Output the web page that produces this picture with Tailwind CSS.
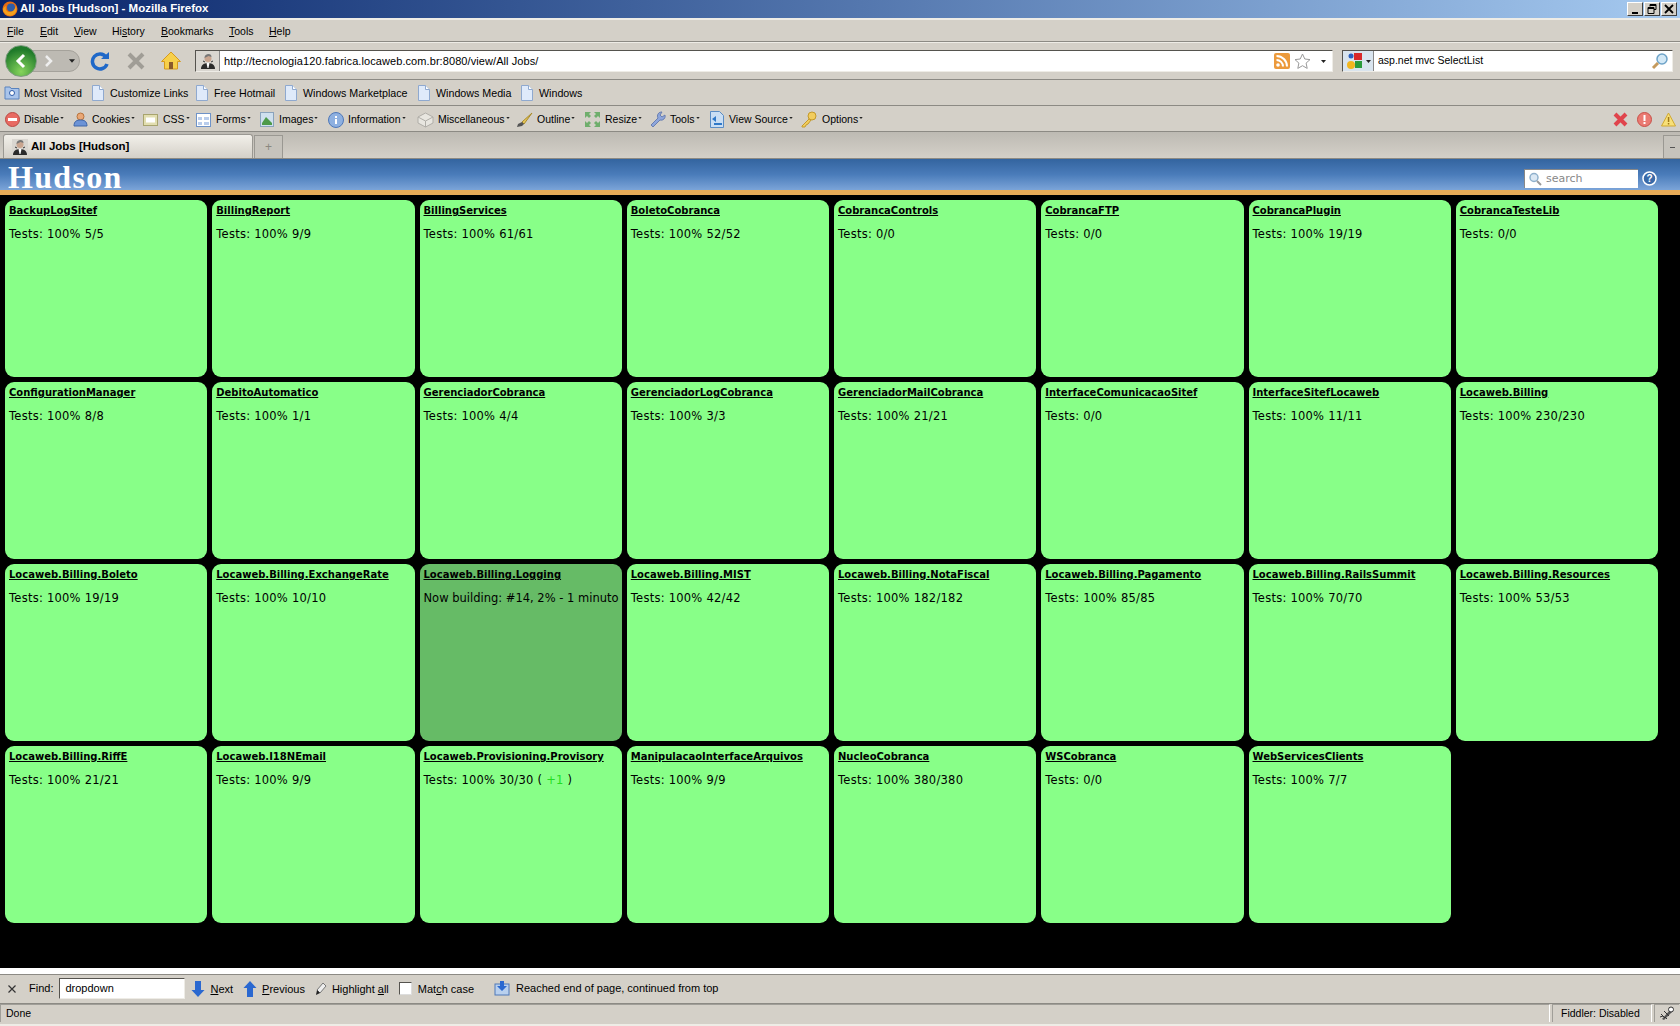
<!DOCTYPE html>
<html lang="en">
<head>
  <meta charset="UTF-8" />
  <title>All Jobs [Hudson] - Mozilla Firefox</title>
  <script src="https://cdn.jsdelivr.net/npm/@tailwindcss/browser@4"></script>
</head>
<body class="w-[1680px] h-[1026px] overflow-hidden flex flex-col bg-[#d4d0c8] font-['Liberation_Sans',sans-serif] text-[11px] text-black">
  <svg class="hidden">
    <symbol id="doc" viewBox="0 0 14 16"><path d="M1.5.5h7l4 4v11h-11z" fill="#dfeafa" stroke="#8fa9cf"/><path d="M8.5.5v4h4" fill="#fff" stroke="#8fa9cf"/></symbol>
    <symbol id="butler" viewBox="0 0 16 16"><rect width="16" height="16" fill="#d9d6d0"/><path d="M1 16c0-4 3-6 7-6s7 2 7 6z" fill="#2b2b2b"/><path d="M6.500 10h3l-1 5h-1z" fill="#fff"/><circle cx="8" cy="5.500" r="3.500" fill="#c9a58f"/><path d="M4.500 5c0-3 2-4 4-4s3 1 3 3l-3-1z" fill="#777"/><path d="M5 9l-2-1M11 9l2-1" stroke="#333"/></symbol>
    <symbol id="tri" viewBox="0 0 5 3"><path d="M0 0h5L2.500 3z" fill="#222"/></symbol>
  </svg>

  <!-- title bar -->
  <div class="h-[18px] shrink-0 flex items-center pl-[2px] pr-[2px] bg-gradient-to-r from-[#0a246a] to-[#a6caf0] text-white font-bold text-[11.5px]">
    <svg class="w-4 h-4 shrink-0" viewBox="0 0 16 16"><circle cx="8" cy="8" r="7.500" fill="#e66b12"/><circle cx="9" cy="6.500" r="4" fill="#2f5ca8"/><path d="M1 9c1 4 6 7 10 5s4-6 3-9c-1 3-3 6-6 6S3 9 4 5C2 6 1 7 1 9z" fill="#f3a01c"/></svg>
    <span class="ml-[2px] leading-none">All Jobs [Hudson] - Mozilla Firefox</span>
    <div class="ml-auto flex gap-[1px] pr-[1px]">
      <div class="w-[16px] h-[14px] bg-[#d4d0c8] border border-t-white border-l-white border-r-[#404040] border-b-[#404040] flex items-end justify-center pb-[1px]"><div class="w-[6px] h-[2px] bg-black"></div></div>
      <div class="w-[16px] h-[14px] bg-[#d4d0c8] border border-t-white border-l-white border-r-[#404040] border-b-[#404040] flex items-center justify-center">
        <svg class="w-[10px] h-[10px]" viewBox="0 0 10 10" fill="none" stroke="#000"><path d="M3 2.500V.5h6v5H7"/><path d="M3 1.500h6" /><path d="M1 3.500h6v6H1zM1 4.500h6"/></svg>
      </div>
      <div class="w-[16px] h-[14px] bg-[#d4d0c8] border border-t-white border-l-white border-r-[#404040] border-b-[#404040] flex items-center justify-center">
        <svg class="w-[10px] h-[10px]" viewBox="0 0 10 10" stroke="#000" stroke-width="1.800"><path d="M1 1l8 8M9 1l-8 8"/></svg>
      </div>
    </div>
  </div>
  <div class="h-[2px] shrink-0 bg-[#eeece6]"></div>

  <!-- menu bar -->
  <div class="h-[22px] shrink-0 flex items-center border-b border-[#8c8a84] pl-[7px] pt-[2px] text-[10.5px]">
    <span class="w-[33px]"><u>F</u>ile</span>
    <span class="w-[34px]"><u>E</u>dit</span>
    <span class="w-[38px]"><u>V</u>iew</span>
    <span class="w-[49px]">Hi<u>s</u>tory</span>
    <span class="w-[68px]"><u>B</u>ookmarks</span>
    <span class="w-[40px]"><u>T</u>ools</span>
    <span><u>H</u>elp</span>
  </div>

  <!-- navigation bar -->
  <div class="h-[38px] shrink-0 flex items-center border-b border-[#8c8a84] border-t border-t-[#eeece6] pl-[5px] relative">
    <div class="w-[75px] h-[32px] shrink-0 flex items-center relative">
      <div class="absolute left-[14px] top-[5px] w-[61px] h-[22px] rounded-r-[11px] bg-[#bdbab3] border border-[#a5a29b]"></div>
      <div class="absolute left-0 top-0 w-[32px] h-[32px] rounded-full bg-[radial-gradient(circle_at_50%_85%,#86d45c,#1f7a2a_75%)] border border-[#7d9c7f] flex items-center justify-center">
        <svg class="w-[14px] h-[16px]" viewBox="0 0 14 16" fill="none" stroke="#fff" stroke-width="3"><path d="M10 2L4 8l6 6"/></svg>
      </div>
      <svg class="absolute left-[38px] top-[10px] w-[10px] h-[12px]" viewBox="0 0 10 12" fill="none" stroke="#eeeeee" stroke-width="2.500"><path d="M3 1l5 5-5 5"/></svg>
      <svg class="absolute left-[64px] top-[14px] w-[6px] h-[4px]"><use href="#tri"/></svg>
    </div>
    <svg class="w-[20px] h-[20px] ml-[10px] shrink-0" viewBox="0 0 20 20" fill="none"><path d="M16 6a7.500 7.500 0 1 0 1 7" stroke="#1f68c8" stroke-width="3.500"/><path d="M11 8h8V1z" fill="#1f68c8"/></svg>
    <svg class="w-[18px] h-[18px] ml-[17px] shrink-0" viewBox="0 0 18 18" stroke="#a09d96" stroke-width="4"><path d="M2 2l14 14M16 2L2 16"/></svg>
    <svg class="w-[20px] h-[20px] ml-[16px] shrink-0" viewBox="0 0 20 20"><path d="M10 1L0.500 10.500H3.500V18h13v-7.500h3z" fill="#f7d04b" stroke="#d69a1e"/><rect x="8" y="11" width="4" height="7" fill="#8a5a2c"/></svg>
    <div class="ml-[14px] w-[1138px] h-[22px] shrink-0 bg-white border border-t-[#55534e] border-l-[#55534e] border-r-[#eeece6] border-b-[#eeece6] flex items-center">
      <div class="w-[24px] h-full bg-[#d9d6d0] border-r border-[#888] flex items-center justify-center shrink-0"><svg class="w-4 h-4"><use href="#butler"/></svg></div>
      <span class="ml-[4px] tracking-[0.08px]">http://tecnologia120.fabrica.locaweb.com.br:8080/view/All Jobs/</span>
      <svg class="ml-auto w-[16px] h-[16px] shrink-0" viewBox="0 0 16 16"><rect width="16" height="16" rx="2" fill="#ec9a3c"/><circle cx="4" cy="12" r="1.800" fill="#fff"/><path d="M2.500 7a6.500 6.500 0 0 1 6.500 6.500M2.500 3a10.500 10.500 0 0 1 10.500 10.500" stroke="#fff" stroke-width="2" fill="none"/></svg>
      <svg class="ml-[4px] w-[17px] h-[17px] shrink-0" viewBox="0 0 17 17"><path d="M8.500 1l2.300 5 5.200.6-3.900 3.500 1.100 5.300-4.700-2.700-4.700 2.700 1.100-5.300L1 6.600 6.200 6z" fill="#fff" stroke="#9a9a9a"/></svg>
      <svg class="ml-[10px] mr-[6px] w-[5px] h-[3px] shrink-0"><use href="#tri"/></svg>
    </div>
    <div class="ml-[9px] w-[331px] h-[22px] shrink-0 bg-white border border-t-[#55534e] border-l-[#55534e] border-r-[#eeece6] border-b-[#eeece6] flex items-center">
      <div class="w-[31px] h-full bg-[#d9e4ee] border-r border-[#888] flex items-center pl-[3px] shrink-0">
        <svg class="w-[18px] h-[18px] shrink-0" viewBox="0 0 18 18"><circle cx="5" cy="4" r="2.500" fill="#2a5fc0"/><rect x="8" y="1" width="8" height="7" fill="#d8282a"/><rect x="9" y="9" width="7" height="7" fill="#2a9a3a"/><circle cx="5" cy="13" r="4" fill="#f2b61e"/></svg>
        <svg class="ml-[2px] w-[5px] h-[3px] shrink-0"><use href="#tri"/></svg>
      </div>
      <span class="ml-[4px] text-[10.5px]">asp.net mvc SelectList</span>
      <svg class="ml-auto mr-[3px] w-[18px] h-[18px] shrink-0" viewBox="0 0 18 18" fill="none"><circle cx="11" cy="7" r="5" fill="#d2e8f6" stroke="#6ea3c8" stroke-width="1.500"/><path d="M7 11l-5 5" stroke="#c59a5e" stroke-width="3"/></svg>
    </div>
  </div>

  <!-- bookmarks -->
  <div class="h-[26px] shrink-0 flex items-center border-b border-[#8c8a84] pl-[4px] pt-[2px] text-[10.7px]">
    <div class="flex items-center w-[87px] shrink-0 gap-[4px]">
      <svg class="w-4 h-4 shrink-0" viewBox="0 0 16 16"><path d="M1 2h5l1 1.500h8V14H1z" fill="#a9c4ea" stroke="#5a83bd"/><circle cx="8" cy="8" r="2.500" fill="#fff" stroke="#2f5ca8"/></svg><span>Most Visited</span>
    </div>
    <div class="flex items-center w-[104px] shrink-0 gap-[5px]"><svg class="w-[14px] h-4 shrink-0"><use href="#doc"/></svg><span>Customize Links</span></div>
    <div class="flex items-center w-[89px] shrink-0 gap-[5px]"><svg class="w-[14px] h-4 shrink-0"><use href="#doc"/></svg><span>Free Hotmail</span></div>
    <div class="flex items-center w-[133px] shrink-0 gap-[5px]"><svg class="w-[14px] h-4 shrink-0"><use href="#doc"/></svg><span>Windows Marketplace</span></div>
    <div class="flex items-center w-[103px] shrink-0 gap-[5px]"><svg class="w-[14px] h-4 shrink-0"><use href="#doc"/></svg><span>Windows Media</span></div>
    <div class="flex items-center shrink-0 gap-[5px]"><svg class="w-[14px] h-4 shrink-0"><use href="#doc"/></svg><span>Windows</span></div>
  </div>

  <!-- web developer toolbar -->
  <div class="h-[26px] shrink-0 flex items-center border-b border-[#8c8a84] pl-[5px] pt-[2px] text-[10.5px]">
    <div class="flex items-center w-[68px] shrink-0 gap-[4px]"><svg class="w-[15px] h-[15px] shrink-0" viewBox="0 0 15 15"><circle cx="7.500" cy="7.500" r="7" fill="#e86a62" stroke="#b94a44"/><rect x="3" y="6" width="9" height="3" fill="#fff"/></svg><span>Disable</span><svg class="w-[4px] h-[2px] -mt-[3px] -ml-[3px]"><use href="#tri"/></svg></div>
    <div class="flex items-center w-[70px] shrink-0 gap-[4px]"><svg class="w-[15px] h-[15px] shrink-0" viewBox="0 0 15 15"><circle cx="7.500" cy="4.500" r="3.500" fill="#eaa876" stroke="#b8733c"/><path d="M1 14c0-5 3-6 6.500-6s6.500 1 6.500 6z" fill="#6c93d6" stroke="#3f66a8"/></svg><span>Cookies</span><svg class="w-[4px] h-[2px] -mt-[3px] -ml-[3px]"><use href="#tri"/></svg></div>
    <div class="flex items-center w-[53px] shrink-0 gap-[5px]"><svg class="w-[15px] h-[12px] shrink-0" viewBox="0 0 15 12"><rect x=".5" y=".5" width="14" height="11" fill="#e2deb0" stroke="#a8a46e"/><rect x="3" y="3.500" width="9" height="5" fill="#fff"/></svg><span>CSS</span><svg class="w-[4px] h-[2px] -mt-[3px] -ml-[4px]"><use href="#tri"/></svg></div>
    <div class="flex items-center w-[64px] shrink-0 gap-[5px]"><svg class="w-[15px] h-[14px] shrink-0" viewBox="0 0 15 14"><rect x=".5" y=".5" width="14" height="13" fill="#fff" stroke="#6f93c8"/><path d="M2 4h4v3H2zM8 4h5v3H8zM2 9h4v3H2zM8 9h5v3H8z" fill="#b9cdec"/></svg><span>Forms</span><svg class="w-[4px] h-[2px] -mt-[3px] -ml-[4px]"><use href="#tri"/></svg></div>
    <div class="flex items-center w-[68px] shrink-0 gap-[5px]"><svg class="w-[14px] h-[15px] shrink-0" viewBox="0 0 14 15"><rect x=".5" y=".5" width="13" height="14" fill="#cfe0ee" stroke="#8aa3bc"/><path d="M2 11l4-6 3 3 3 3v2H2z" fill="#4d9a4a"/></svg><span>Images</span><svg class="w-[4px] h-[2px] -mt-[3px] -ml-[4px]"><use href="#tri"/></svg></div>
    <div class="flex items-center w-[89px] shrink-0 gap-[4px]"><svg class="w-[16px] h-[16px] shrink-0" viewBox="0 0 16 16"><circle cx="8" cy="8" r="7.500" fill="#8eb0e0" stroke="#4f78b8"/><rect x="7" y="7" width="2" height="5" fill="#fff"/><rect x="7" y="4" width="2" height="2" fill="#fff"/></svg><span>Information</span><svg class="w-[4px] h-[2px] -mt-[3px] -ml-[3px]"><use href="#tri"/></svg></div>
    <div class="flex items-center w-[99px] shrink-0 gap-[4px]"><svg class="w-[17px] h-[16px] shrink-0" viewBox="0 0 17 16"><path d="M8.500 1L16 5v6l-7.500 4L1 11V5z" fill="#e8e6e0" stroke="#b0aea8"/><path d="M1 5l7.500 4L16 5M8.500 9v6" fill="none" stroke="#b0aea8"/></svg><span>Miscellaneous</span><svg class="w-[4px] h-[2px] -mt-[3px] -ml-[3px]"><use href="#tri"/></svg></div>
    <div class="flex items-center w-[68px] shrink-0 gap-[4px]"><svg class="w-[17px] h-[16px] shrink-0" viewBox="0 0 17 16"><path d="M16 1L6 10l2 2z" fill="#e8c85a" stroke="#a88a2a"/><path d="M6 10l-4 2-1 3 5-1 2-2z" fill="#555"/></svg><span>Outline</span><svg class="w-[4px] h-[2px] -mt-[3px] -ml-[3px]"><use href="#tri"/></svg></div>
    <div class="flex items-center w-[66px] shrink-0 gap-[4px]"><svg class="w-[17px] h-[17px] shrink-0" viewBox="0 0 17 17"><path d="M1 1h6L5 3l2 2-2 2-2-2-2 2zM16 1v6l-2-2-2 2-2-2 2-2-2-2zM1 16v-6l2 2 2-2 2 2-2 2 2 2zM16 16h-6l2-2-2-2 2-2 2 2 2-2z" fill="#6fae6c"/></svg><span>Resize</span><svg class="w-[4px] h-[2px] -mt-[3px] -ml-[3px]"><use href="#tri"/></svg></div>
    <div class="flex items-center w-[59px] shrink-0 gap-[4px]"><svg class="w-[16px] h-[17px] shrink-0" viewBox="0 0 16 17"><path d="M11 1a4 4 0 0 0-3 6L1 14l2 2 7-7a4 4 0 0 0 5-5l-3 2-2-2 2-3z" fill="#8ea6dc" stroke="#6a7fb0"/></svg><span>Tools</span><svg class="w-[4px] h-[2px] -mt-[3px] -ml-[3px]"><use href="#tri"/></svg></div>
    <div class="flex items-center w-[91px] shrink-0 gap-[4px]"><svg class="w-[16px] h-[17px] shrink-0" viewBox="0 0 16 17"><path d="M1.500.5h9l4 4v12h-13z" fill="#c9def4" stroke="#5a8cc4"/><path d="M3 8l4-3v6zM5 12h8v2H5z" fill="#2f78c8"/></svg><span>View Source</span><svg class="w-[4px] h-[2px] -mt-[3px] -ml-[3px]"><use href="#tri"/></svg></div>
    <div class="flex items-center shrink-0 gap-[5px]"><svg class="w-[17px] h-[17px] shrink-0" viewBox="0 0 17 17"><circle cx="12" cy="5" r="4" fill="#f2cd5e" stroke="#c49a2a"/><path d="M9 8l-7 7v1h3l1-2 2-1 3-4z" fill="#f2cd5e" stroke="#c49a2a"/></svg><span>Options</span><svg class="w-[4px] h-[2px] -mt-[3px] -ml-[4px]"><use href="#tri"/></svg></div>
    <div class="ml-auto flex items-center pr-[4px]">
      <svg class="w-[15px] h-[15px] shrink-0" viewBox="0 0 15 15" stroke="#e0444c" stroke-width="4"><path d="M2 2l11 11M13 2L2 13"/></svg>
      <svg class="ml-[9px] w-[15px] h-[15px] shrink-0" viewBox="0 0 15 15"><circle cx="7.500" cy="7.500" r="7" fill="#ea7a72" stroke="#c85048"/><rect x="6.500" y="3" width="2" height="6" fill="#fff"/><rect x="6.500" y="10" width="2" height="2" fill="#fff"/></svg>
      <svg class="ml-[9px] w-[15px] h-[15px] shrink-0" viewBox="0 0 15 15"><path d="M7.500 1L14.500 14H.5z" fill="#f8e078" stroke="#d0a830"/><rect x="6.800" y="5" width="1.500" height="5" fill="#a07818"/><rect x="6.800" y="11" width="1.500" height="1.500" fill="#a07818"/></svg>
    </div>
  </div>

  <!-- tab strip -->
  <div class="h-[27px] shrink-0 flex items-end border-b border-[#8c8a84] pl-[3px] bg-gradient-to-b from-[#bdbab3] to-[#d4d0c8]">
    <div class="w-[250px] h-[24px] bg-gradient-to-b from-[#f2f0ea] to-[#d4d0c8] border border-[#9a9892] border-b-0 rounded-t-[3px] flex items-center pl-[8px] gap-[3px] font-bold text-[11.5px]">
      <svg class="w-4 h-4 shrink-0"><use href="#butler"/></svg><span>All Jobs [Hudson]</span>
    </div>
    <div class="ml-[1px] w-[29px] h-[23px] bg-[#c6c3bc] border border-[#9a9892] border-b-0 flex items-center justify-center text-[#8a8880] text-[12px]">+</div>
    <div class="ml-auto w-[17px] h-[23px] bg-[#c6c3bc] border border-[#9a9892] border-b-0 border-r-0 flex items-center justify-center">
      <div class="w-[5px] h-[1px] bg-[#555]"></div>
    </div>
  </div>

  <!-- hudson header -->
  <div class="h-[31px] shrink-0 flex items-center pl-[8px] bg-gradient-to-b from-[#33649f] via-[#4a7cba] to-[#7ba4d8]">
    <span class="mt-[5px] font-['Liberation_Serif',serif] font-bold text-[32px] tracking-[1.3px] leading-none text-white">Hudson</span>
    <div class="ml-auto mt-[8px] flex items-center pr-[23px]">
      <div class="w-[114px] h-[19px] bg-white border-l border-t border-[#888] flex items-center pl-[3px] gap-[4px] text-[#888] font-['DejaVu_Sans',sans-serif]">
        <svg class="w-[14px] h-[14px] shrink-0" viewBox="0 0 14 14" fill="none"><circle cx="6" cy="5.500" r="4" fill="#dbe8f4" stroke="#8fb0cc" stroke-width="1.500"/><path d="M9 9l4 4" stroke="#9a9a9a" stroke-width="2"/></svg>
        <span>search</span>
      </div>
      <svg class="ml-[4px] w-[15px] h-[15px] shrink-0" viewBox="0 0 15 15"><circle cx="7.500" cy="7.500" r="6.500" fill="#3a6aa8" stroke="#fff" stroke-width="1.500"/><text x="7.500" y="11" text-anchor="middle" font-family="Liberation Sans" font-weight="bold" font-size="10" fill="#fff">?</text></svg>
    </div>
  </div>
  <div class="h-[5px] shrink-0 bg-[#e8ab57]"></div>

  <!-- job grid -->
  <div class="flex-1 bg-black pt-[5px] pl-[5px] pr-[22px] font-['DejaVu_Sans',sans-serif]">
    <div class="grid grid-cols-8 auto-rows-[177px] gap-x-[5px] gap-y-[5px]">
      <div class="bg-[#88ff88] rounded-[9px] px-[4px] pt-[3px]"><a class="text-[10px] font-bold underline block leading-[16px]">BackupLogSitef</a><p class="mt-[7px] text-[11.5px] tracking-[0.25px] leading-[16px]">Tests: 100% 5/5</p></div>
      <div class="bg-[#88ff88] rounded-[9px] px-[4px] pt-[3px]"><a class="text-[10px] font-bold underline block leading-[16px]">BillingReport</a><p class="mt-[7px] text-[11.5px] tracking-[0.25px] leading-[16px]">Tests: 100% 9/9</p></div>
      <div class="bg-[#88ff88] rounded-[9px] px-[4px] pt-[3px]"><a class="text-[10px] font-bold underline block leading-[16px]">BillingServices</a><p class="mt-[7px] text-[11.5px] tracking-[0.25px] leading-[16px]">Tests: 100% 61/61</p></div>
      <div class="bg-[#88ff88] rounded-[9px] px-[4px] pt-[3px]"><a class="text-[10px] font-bold underline block leading-[16px]">BoletoCobranca</a><p class="mt-[7px] text-[11.5px] tracking-[0.25px] leading-[16px]">Tests: 100% 52/52</p></div>
      <div class="bg-[#88ff88] rounded-[9px] px-[4px] pt-[3px]"><a class="text-[10px] font-bold underline block leading-[16px]">CobrancaControls</a><p class="mt-[7px] text-[11.5px] tracking-[0.25px] leading-[16px]">Tests: 0/0</p></div>
      <div class="bg-[#88ff88] rounded-[9px] px-[4px] pt-[3px]"><a class="text-[10px] font-bold underline block leading-[16px]">CobrancaFTP</a><p class="mt-[7px] text-[11.5px] tracking-[0.25px] leading-[16px]">Tests: 0/0</p></div>
      <div class="bg-[#88ff88] rounded-[9px] px-[4px] pt-[3px]"><a class="text-[10px] font-bold underline block leading-[16px]">CobrancaPlugin</a><p class="mt-[7px] text-[11.5px] tracking-[0.25px] leading-[16px]">Tests: 100% 19/19</p></div>
      <div class="bg-[#88ff88] rounded-[9px] px-[4px] pt-[3px]"><a class="text-[10px] font-bold underline block leading-[16px]">CobrancaTesteLib</a><p class="mt-[7px] text-[11.5px] tracking-[0.25px] leading-[16px]">Tests: 0/0</p></div>

      <div class="bg-[#88ff88] rounded-[9px] px-[4px] pt-[3px]"><a class="text-[10px] font-bold underline block leading-[16px]">ConfigurationManager</a><p class="mt-[7px] text-[11.5px] tracking-[0.25px] leading-[16px]">Tests: 100% 8/8</p></div>
      <div class="bg-[#88ff88] rounded-[9px] px-[4px] pt-[3px]"><a class="text-[10px] font-bold underline block leading-[16px]">DebitoAutomatico</a><p class="mt-[7px] text-[11.5px] tracking-[0.25px] leading-[16px]">Tests: 100% 1/1</p></div>
      <div class="bg-[#88ff88] rounded-[9px] px-[4px] pt-[3px]"><a class="text-[10px] font-bold underline block leading-[16px]">GerenciadorCobranca</a><p class="mt-[7px] text-[11.5px] tracking-[0.25px] leading-[16px]">Tests: 100% 4/4</p></div>
      <div class="bg-[#88ff88] rounded-[9px] px-[4px] pt-[3px]"><a class="text-[10px] font-bold underline block leading-[16px]">GerenciadorLogCobranca</a><p class="mt-[7px] text-[11.5px] tracking-[0.25px] leading-[16px]">Tests: 100% 3/3</p></div>
      <div class="bg-[#88ff88] rounded-[9px] px-[4px] pt-[3px]"><a class="text-[10px] font-bold underline block leading-[16px]">GerenciadorMailCobranca</a><p class="mt-[7px] text-[11.5px] tracking-[0.25px] leading-[16px]">Tests: 100% 21/21</p></div>
      <div class="bg-[#88ff88] rounded-[9px] px-[4px] pt-[3px]"><a class="text-[10px] font-bold underline block leading-[16px]">InterfaceComunicacaoSitef</a><p class="mt-[7px] text-[11.5px] tracking-[0.25px] leading-[16px]">Tests: 0/0</p></div>
      <div class="bg-[#88ff88] rounded-[9px] px-[4px] pt-[3px]"><a class="text-[10px] font-bold underline block leading-[16px]">InterfaceSitefLocaweb</a><p class="mt-[7px] text-[11.5px] tracking-[0.25px] leading-[16px]">Tests: 100% 11/11</p></div>
      <div class="bg-[#88ff88] rounded-[9px] px-[4px] pt-[3px]"><a class="text-[10px] font-bold underline block leading-[16px]">Locaweb.Billing</a><p class="mt-[7px] text-[11.5px] tracking-[0.25px] leading-[16px]">Tests: 100% 230/230</p></div>

      <div class="bg-[#88ff88] rounded-[9px] px-[4px] pt-[3px]"><a class="text-[10px] font-bold underline block leading-[16px]">Locaweb.Billing.Boleto</a><p class="mt-[7px] text-[11.5px] tracking-[0.25px] leading-[16px]">Tests: 100% 19/19</p></div>
      <div class="bg-[#88ff88] rounded-[9px] px-[4px] pt-[3px]"><a class="text-[10px] font-bold underline block leading-[16px]">Locaweb.Billing.ExchangeRate</a><p class="mt-[7px] text-[11.5px] tracking-[0.25px] leading-[16px]">Tests: 100% 10/10</p></div>
      <div class="bg-[#66bb66] rounded-[9px] px-[4px] pt-[3px]"><a class="text-[10px] font-bold underline block leading-[16px]">Locaweb.Billing.Logging</a><p class="mt-[7px] text-[11.5px] leading-[16px] whitespace-nowrap">Now building: #14, 2% - 1 minuto</p></div>
      <div class="bg-[#88ff88] rounded-[9px] px-[4px] pt-[3px]"><a class="text-[10px] font-bold underline block leading-[16px]">Locaweb.Billing.MIST</a><p class="mt-[7px] text-[11.5px] tracking-[0.25px] leading-[16px]">Tests: 100% 42/42</p></div>
      <div class="bg-[#88ff88] rounded-[9px] px-[4px] pt-[3px]"><a class="text-[10px] font-bold underline block leading-[16px]">Locaweb.Billing.NotaFiscal</a><p class="mt-[7px] text-[11.5px] tracking-[0.25px] leading-[16px]">Tests: 100% 182/182</p></div>
      <div class="bg-[#88ff88] rounded-[9px] px-[4px] pt-[3px]"><a class="text-[10px] font-bold underline block leading-[16px]">Locaweb.Billing.Pagamento</a><p class="mt-[7px] text-[11.5px] tracking-[0.25px] leading-[16px]">Tests: 100% 85/85</p></div>
      <div class="bg-[#88ff88] rounded-[9px] px-[4px] pt-[3px]"><a class="text-[10px] font-bold underline block leading-[16px]">Locaweb.Billing.RailsSummit</a><p class="mt-[7px] text-[11.5px] tracking-[0.25px] leading-[16px]">Tests: 100% 70/70</p></div>
      <div class="bg-[#88ff88] rounded-[9px] px-[4px] pt-[3px]"><a class="text-[10px] font-bold underline block leading-[16px]">Locaweb.Billing.Resources</a><p class="mt-[7px] text-[11.5px] tracking-[0.25px] leading-[16px]">Tests: 100% 53/53</p></div>

      <div class="bg-[#88ff88] rounded-[9px] px-[4px] pt-[3px]"><a class="text-[10px] font-bold underline block leading-[16px]">Locaweb.Billing.RiffE</a><p class="mt-[7px] text-[11.5px] tracking-[0.25px] leading-[16px]">Tests: 100% 21/21</p></div>
      <div class="bg-[#88ff88] rounded-[9px] px-[4px] pt-[3px]"><a class="text-[10px] font-bold underline block leading-[16px]">Locaweb.I18NEmail</a><p class="mt-[7px] text-[11.5px] tracking-[0.25px] leading-[16px]">Tests: 100% 9/9</p></div>
      <div class="bg-[#88ff88] rounded-[9px] px-[4px] pt-[3px]"><a class="text-[10px] font-bold underline block leading-[16px]">Locaweb.Provisioning.Provisory</a><p class="mt-[7px] text-[11.5px] tracking-[0.25px] leading-[16px]">Tests: 100% 30/30 ( <span class="text-[#22dd22]">+1</span> )</p></div>
      <div class="bg-[#88ff88] rounded-[9px] px-[4px] pt-[3px]"><a class="text-[10px] font-bold underline block leading-[16px]">ManipulacaoInterfaceArquivos</a><p class="mt-[7px] text-[11.5px] tracking-[0.25px] leading-[16px]">Tests: 100% 9/9</p></div>
      <div class="bg-[#88ff88] rounded-[9px] px-[4px] pt-[3px]"><a class="text-[10px] font-bold underline block leading-[16px]">NucleoCobranca</a><p class="mt-[7px] text-[11.5px] tracking-[0.25px] leading-[16px]">Tests: 100% 380/380</p></div>
      <div class="bg-[#88ff88] rounded-[9px] px-[4px] pt-[3px]"><a class="text-[10px] font-bold underline block leading-[16px]">WSCobranca</a><p class="mt-[7px] text-[11.5px] tracking-[0.25px] leading-[16px]">Tests: 0/0</p></div>
      <div class="bg-[#88ff88] rounded-[9px] px-[4px] pt-[3px]"><a class="text-[10px] font-bold underline block leading-[16px]">WebServicesClients</a><p class="mt-[7px] text-[11.5px] tracking-[0.25px] leading-[16px]">Tests: 100% 7/7</p></div>
    </div>
  </div>

  <!-- find bar -->
  <div class="h-[7px] shrink-0 bg-white border-b border-[#8c8a84]"></div>
  <div class="h-[29px] shrink-0 flex items-center border-b border-[#8c8a84] pl-[8px] pb-[1px]">
    <svg class="w-[8px] h-[8px] shrink-0" viewBox="0 0 8 8" stroke="#333" stroke-width="1.200"><path d="M.5.5l7 7M7.500.5l-7 7"/></svg>
    <span class="ml-[13px]">Find:</span>
    <div class="ml-[6px] w-[126px] h-[21px] bg-white border border-t-[#55534e] border-l-[#55534e] border-r-[#eeece6] border-b-[#eeece6] flex items-center pl-[5px]">dropdown</div>
    <svg class="ml-[6px] w-[14px] h-[18px] shrink-0" viewBox="0 0 14 18"><path d="M4 1h6v9h3.500L7 17 .5 10H4z" fill="#2a68d0"/></svg>
    <span class="ml-[5px] mt-[2px]"><u>N</u>ext</span>
    <svg class="ml-[10px] w-[14px] h-[18px] shrink-0" viewBox="0 0 14 18"><path d="M4 17h6V8h3.500L7 1 .5 8H4z" fill="#2a68d0"/></svg>
    <span class="ml-[5px] mt-[2px]"><u>P</u>revious</span>
    <svg class="ml-[9px] w-[13px] h-[14px] shrink-0" viewBox="0 0 13 14"><path d="M9 1l3 3-6 7-3-3z" fill="#eeeeee" stroke="#777"/><path d="M3 8l3 3-4 2z" fill="#222"/></svg>
    <span class="ml-[5px] mt-[2px]">Highlight <u>a</u>ll</span>
    <div class="ml-[10px] w-[13px] h-[13px] bg-white border border-t-[#55534e] border-l-[#55534e] border-r-[#ddd] border-b-[#ddd] shrink-0"></div>
    <span class="ml-[6px] mt-[2px]">Mat<u>c</u>h case</span>
    <svg class="ml-[20px] w-[16px] h-[15px] shrink-0" viewBox="0 0 16 15"><rect x="1" y="3" width="14" height="11" fill="#b9d0ee" stroke="#4f78b8"/><path d="M6 0h4v5h3L8 10 3 5h3z" fill="#2a68d0"/></svg>
    <span class="ml-[6px]">Reached end of page, continued from top</span>
  </div>

  <!-- status bar -->
  <div class="h-[22px] shrink-0 flex items-stretch pb-[2px] border-b-2 border-[#eeece6] text-[10.5px]">
    <div class="flex-1 flex items-center pl-[5px] border-l border-t border-[#a09e98] border-r border-r-white">Done</div>
    <div class="w-[100px] ml-[2px] flex items-center pl-[8px] border-l border-t border-[#a09e98] border-r border-r-white">Fiddler: Disabled</div>
    <div class="w-[25px] ml-[2px] mr-[1px] flex items-center justify-center border-l border-t border-[#a09e98]">
      <svg class="w-[16px] h-[15px]" viewBox="0 0 16 15"><path d="M3 13L11 4l2 2-8 8z" fill="#555"/><circle cx="12" cy="3.500" r="2.500" fill="#fff" stroke="#333"/><path d="M2 8l4 4M5 5l5 5M8 13l-2-2M1 11l3-1" stroke="#333" fill="none"/></svg>
    </div>
  </div>
</body>
</html>
